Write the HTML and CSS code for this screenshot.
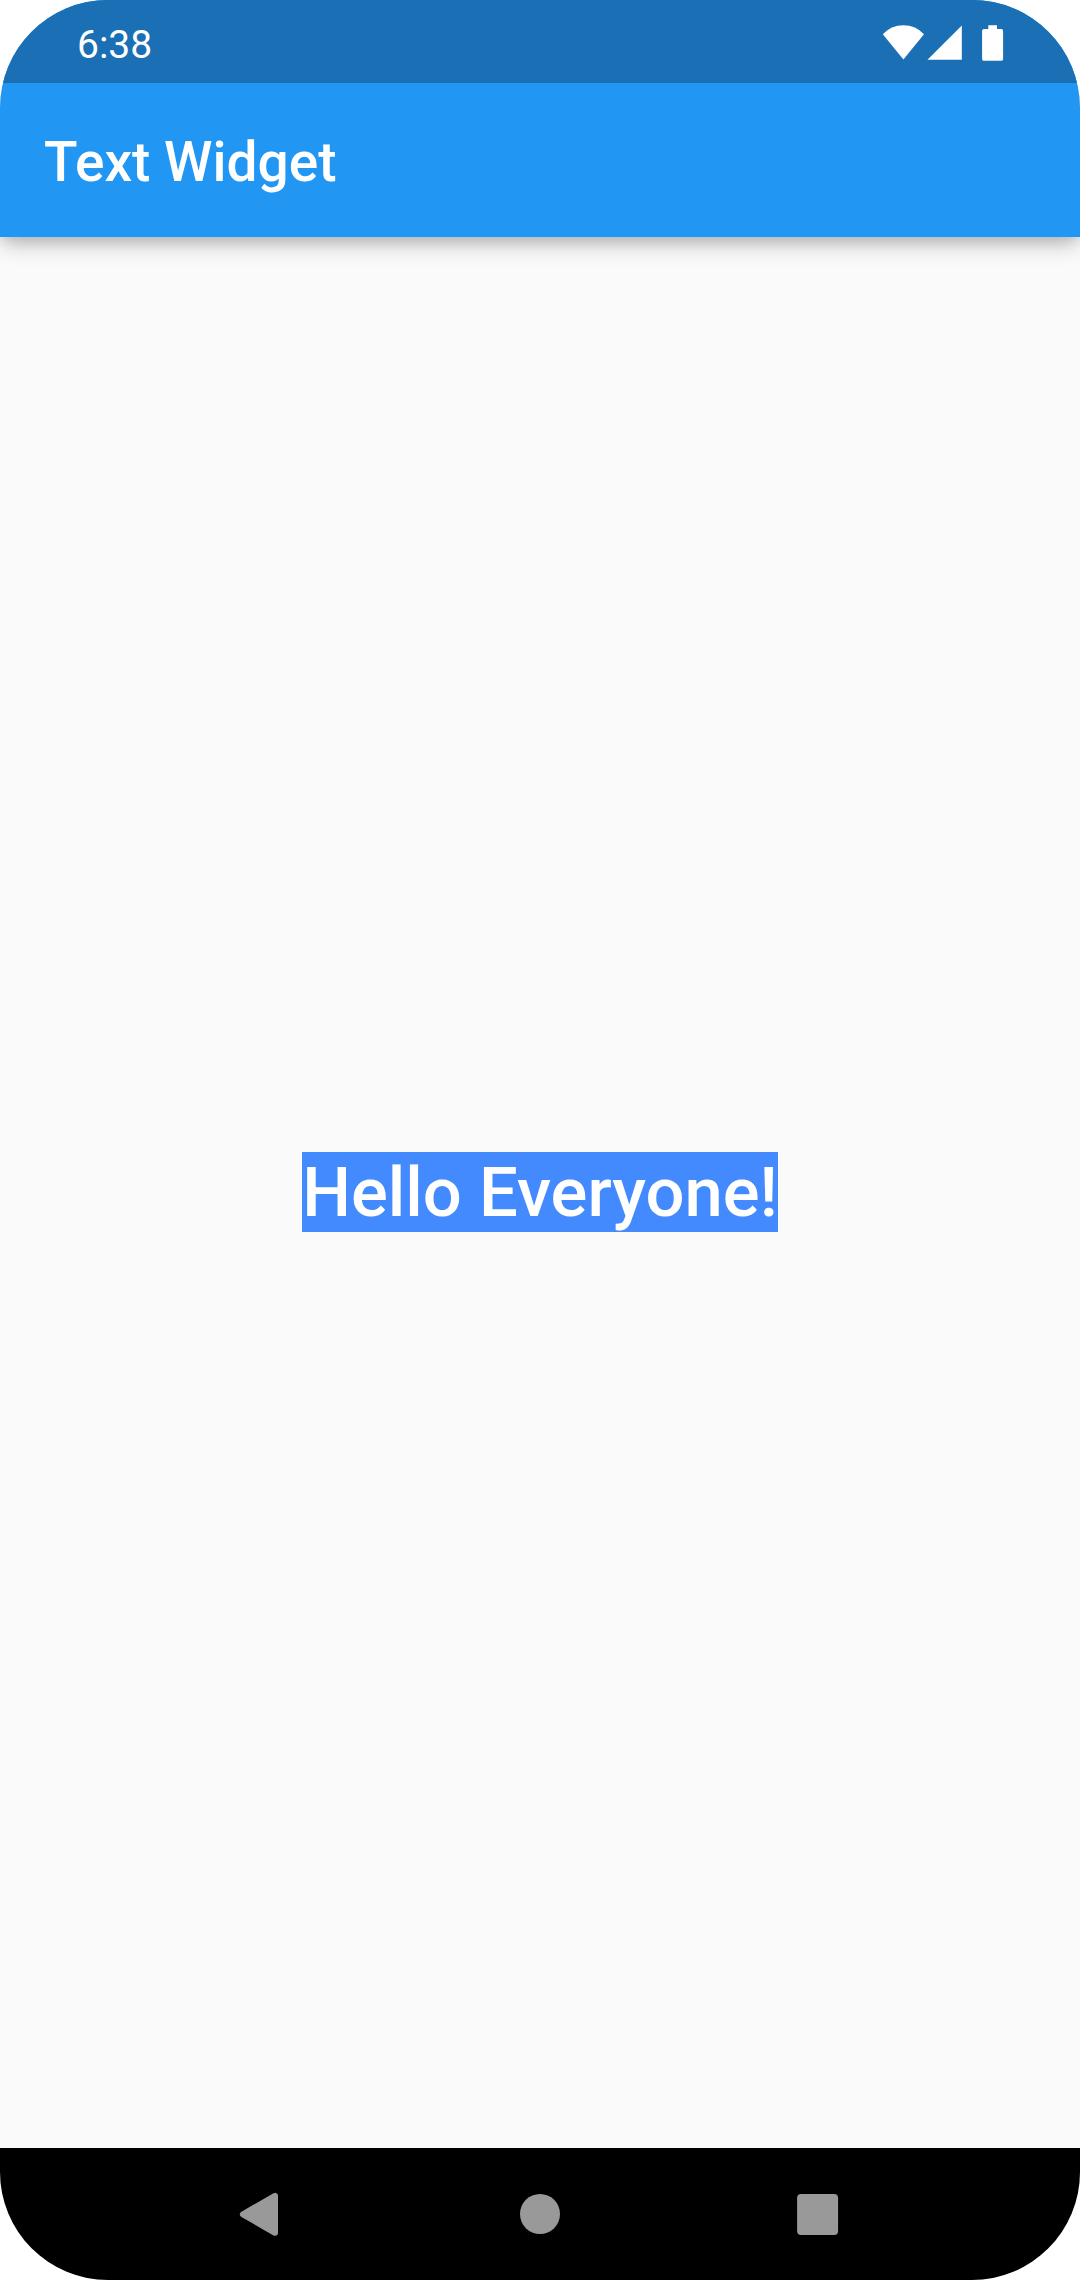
FILE: index.html
```html
<!DOCTYPE html>
<html lang="en">
<head>
<meta charset="utf-8">
<title>Text Widget</title>
<link rel="stylesheet" href="styles.css">
</head>
<body>
<div class="device">
  <header class="top">
    <div class="status">
      <span class="clock">6:38</span>
      <svg class="status-icons" viewBox="0 0 122 40" aria-hidden="true">
        <path d="M0.8 10.2Q9 1.2 21.4 1.2T42 10.2L21.4 35.5Z"/>
        <path d="M79.8 1.5V35.7H45.5Z"/>
        <path d="M106.3 1.3h8.7V5h4.2a1.9 1.9 0 0 1 1.9 1.9v28a1.9 1.9 0 0 1-1.9 1.9h-17.2a1.9 1.9 0 0 1-1.9-1.9v-28A1.9 1.9 0 0 1 102 5h4.3Z"/>
      </svg>
    </div>
    <h1 class="title">Text Widget</h1>
  </header>
  <main class="content"><span class="greeting">Hello Everyone!</span></main>
  <nav class="nav">
    <svg class="nav-icon" viewBox="0 0 50 50" aria-label="Back"><path class="rounded" d="M8.9 25.3 41 6.8V43.8Z"/></svg>
    <svg class="nav-icon" viewBox="0 0 50 50" aria-label="Home"><circle cx="26" cy="25" r="20"/></svg>
    <svg class="nav-icon" viewBox="0 0 50 50" aria-label="Overview"><rect x="4.1" y="5" width="41" height="41" rx="4"/></svg>
  </nav>
</div>
</body>
</html>
```
FILE: styles.css
```css
* { box-sizing: border-box; }
body { margin: 0; background: #fff; font-family: Roboto, sans-serif; }
.device { display: flex; flex-direction: column; width: 1080px; height: 2280px; border-radius: 108px; overflow: hidden; background: #fafafa; }
.top { height: 237px; background: #2196f3; color: #fff; box-shadow: 0 10px 20px -3px rgba(0,0,0,.25), 0 2px 12px rgba(0,0,0,.1); }
.status { display: flex; justify-content: space-between; align-items: center; height: 83px; padding: 5px 76px 0 77px; background: #1a6fb5; }
.clock { padding-top: 2px; font-size: 39px; line-height: 46px; }
.status-icons { width: 122px; height: 40px; fill: #fff; }
.title { display: flex; align-items: center; height: 154px; margin: 0; padding: 4px 44px 0; font-size: 55px; font-weight: 500; line-height: 64px; }
.content { flex: 1; display: flex; align-items: center; justify-content: center; }
.greeting { margin-bottom: 1px; padding-top: 1.5px; background: #448aff; color: #fff; font-size: 68.75px; font-weight: 500; line-height: 79px; }
.nav { display: flex; justify-content: space-between; align-items: center; height: 132px; padding: 0 237px 0 234px; background: #000; }
.nav-icon { width: 50px; height: 50px; fill: #999; }
.rounded { stroke: #999; stroke-width: 6px; stroke-linejoin: round; }
```
